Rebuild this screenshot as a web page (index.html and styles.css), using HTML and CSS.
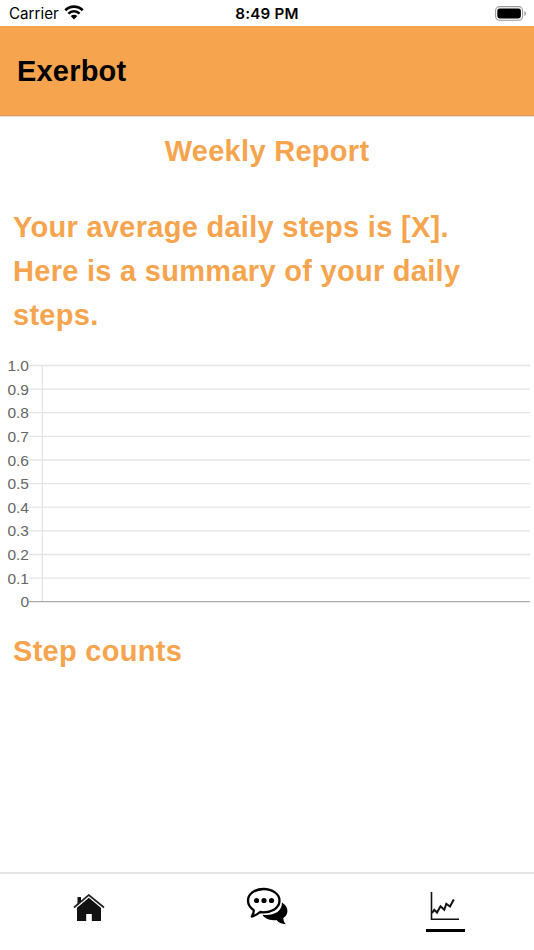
FILE: index.html
```html
<!DOCTYPE html>
<html lang="en">
<head>
    <meta charset="UTF-8">
    <meta name="viewport" content="width=device-width, initial-scale=1.0">
    <title>Exerbot</title>
    <link rel="stylesheet" href="styles.css">
</head>
<body>
    <div class="status-bar">
        <div class="carrier">
            <span>Carrier</span>
            <svg class="wifi" width="20" height="15" viewBox="0 0 20 15">
                <path d="M1.3 5.2C6.2.4 13.8.4 18.7 5.2M4.4 8.6C7.6 5.5 12.4 5.5 15.6 8.6" fill="none" stroke="#000" stroke-width="2.6"/>
                <path d="M6.7 11C8.6 9.200 11.400 9.200 13.300 11L10 14.400Z"/>
            </svg>
        </div>
        <div class="time">8:49 PM</div>
        <div class="battery">
            <svg width="32" height="15" viewBox="0 0 32 15">
                <rect x=".6" y=".6" width="27" height="13.600" rx="4" fill="none" stroke="#999" stroke-width="1.100"/>
                <rect x="2.300" y="2.400" width="23.600" height="10" rx="2.300"/>
                <path d="M29.400 5v5c2-.8 2-4.200 0-5z" fill="#999"/>
            </svg>
        </div>
    </div>
    <header class="header">
        <h1>Exerbot</h1>
    </header>
    <main class="content">
        <h2 class="report-title">Weekly Report</h2>
        <p class="summary">Your average daily steps is [X]. Here is a summary of your daily steps.</p>
        <svg class="chart" width="534" height="256" viewBox="0 0 534 256">
            <g class="grid">
                <path d="M29 11.500H530"/>
                <path d="M29 35.100H530"/>
                <path d="M29 58.700H530"/>
                <path d="M29 82.400H530"/>
                <path d="M29 106H530"/>
                <path d="M29 129.600H530"/>
                <path d="M29 153.200H530"/>
                <path d="M29 176.800H530"/>
                <path d="M29 200.500H530"/>
                <path d="M29 224.100H530"/>
                <path d="M42.300 11.500V247.700"/>
            </g>
            <path class="axis" d="M29 247.700H530"/>
            <g class="labels">
                <text x="29" y="17">1.0</text>
                <text x="29" y="40.600">0.9</text>
                <text x="29" y="64.200">0.8</text>
                <text x="29" y="87.900">0.7</text>
                <text x="29" y="111.500">0.6</text>
                <text x="29" y="135.100">0.5</text>
                <text x="29" y="158.700">0.4</text>
                <text x="29" y="182.300">0.3</text>
                <text x="29" y="206">0.2</text>
                <text x="29" y="229.600">0.1</text>
                <text x="29" y="253.200">0</text>
            </g>
        </svg>
        <h2 class="steps-title">Step counts</h2>
    </main>
    <nav class="tabs">
        <a class="tab">
            <svg width="32" height="28" viewBox="0 0 32 28">
                <path d="M4 27V13.500L16 3.500L28 13.500V27H18.800V20H13.200V27ZM4.500 3H8V8L4.500 11Z" fill="#111"/>
                <path d="M1 13.500L15.800 1L31 13.500" fill="none" stroke="#222" stroke-width="1.700"/>
                <path d="M3.500 13.500L15.800 3.300L28 13.500" fill="none" stroke="#fff" stroke-width=".7"/>
            </svg>
        </a>
        <a class="tab">
            <svg width="42" height="40" viewBox="0 0 42 40">
                <path d="M36 15.500C44 20.500 42 28.500 37.300 31C37.300 33.700 38.500 35.700 39.800 37.200C35.500 37 32.500 35.500 30.500 33C24 34 18.500 31.500 16.500 27.800C27 29 36 25 36 15.500Z"/>
                <path d="M17.500 2C8.500 2 2 7.300 2 13.600C2 17.700 4.300 21 7.800 23.200C7.900 25.500 7 27.500 5.800 29.500C9.500 28.800 12 26.800 14 25C25 26.500 33.500 21.300 33.500 13.600C33.500 7.300 26.500 2 17.500 2Z" fill="#fff" stroke="#000" stroke-width="2.300" stroke-linejoin="round"/>
                <circle cx="10.500" cy="13.500" r="2.600"/>
                <circle cx="18" cy="13.500" r="2.600"/>
                <circle cx="25.500" cy="13.500" r="2.600"/>
            </svg>
        </a>
        <a class="tab active">
            <svg width="30" height="30" viewBox="0 0 30 30">
                <path d="M1.500 1V28.300H29" fill="none" stroke="#111" stroke-width="1.600"/>
                <path d="M2 22L4.300 18.800L7 21.500L10.500 15.300L14.300 18.800L16.300 12.800L20 15.500L23.800 8.500" fill="none" stroke="#111" stroke-width="2"/>
            </svg>
        </a>
    </nav>
</body>
</html>
```
FILE: styles.css
```css
* {
    box-sizing: border-box;
}
body {
    font-family: "Liberation Sans", Arial, sans-serif;
    margin: 0;
    height: 950px;
    display: flex;
    flex-direction: column;
    background: #fff;
    color: #000;
    overflow: hidden;
}
h1, h2, p {
    margin: 0;
}
.status-bar {
    height: 26px;
    padding: 1px 7px 0 9px;
    display: grid;
    grid-template-columns: 1fr auto 1fr;
    align-items: center;
    font-family: Inter, sans-serif;
    font-size: 15.2px;
    line-height: 24px;
}
.carrier {
    display: flex;
    align-items: center;
    gap: 5px;
}
.carrier span, .time {
    padding-top: 1px;
}
.wifi {
    margin-bottom: 2px;
}
.time {
    font-weight: 600;
    letter-spacing: 0.2px;
    margin-right: 2px;
}
.battery {
    display: flex;
    justify-content: flex-end;
    padding-bottom: 1px;
}
.header {
    height: 90px;
    padding: 2px 17px 0;
    display: flex;
    align-items: center;
    background: #f6a44e;
    border-bottom: 1px solid #d99c5e;
    box-shadow: 0 1px 1px #eee0d2;
}
.header h1 {
    font-size: 29px;
    letter-spacing: 0.2px;
}
.content {
    flex: 1;
    color: #f6a44e;
    font-size: 29px;
    font-weight: bold;
    line-height: 44px;
    letter-spacing: 0.29px;
}
.content h2 {
    font-size: 29px;
}
.report-title {
    padding-top: 13px;
    text-align: center;
}
.summary {
    padding: 32px 60px 0 13px;
}
.chart {
    display: block;
    margin-top: 17px;
}
.grid path {
    stroke: #e4e4e4;
    stroke-width: 1.3;
}
.axis {
    stroke: #aaa;
    stroke-width: 1.3;
}
.labels text {
    fill: #666;
    font-size: 15.5px;
    font-weight: normal;
    letter-spacing: 0;
    text-anchor: end;
}
.steps-title {
    padding: 19px 13px 0;
}
.tabs {
    height: 78px;
    border-top: 2px solid #e5e5e5;
    display: flex;
}
.tab {
    flex: 1;
    display: flex;
    justify-content: center;
    padding-top: 20px;
}
.tab:nth-child(2) {
    padding-top: 13px;
}
.active {
    flex-direction: column;
    justify-content: flex-start;
    align-items: center;
    padding-top: 17px;
}
.active::after {
    content: "";
    width: 39px;
    height: 3px;
    margin-top: 8px;
    background: #000;
}
```
